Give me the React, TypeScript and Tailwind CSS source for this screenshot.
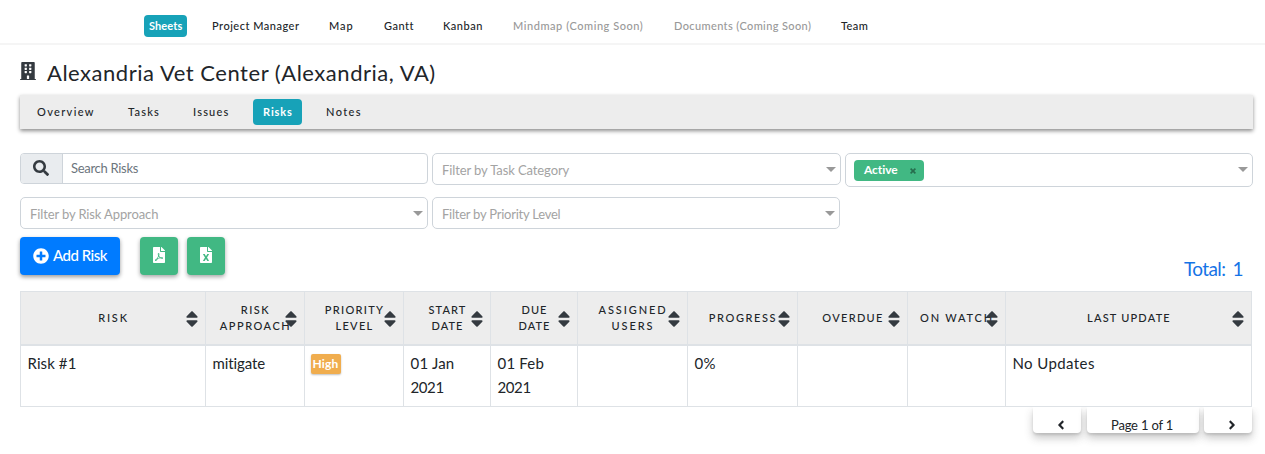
import type { ReactNode } from "react";
import { FaBuilding, FaSearch, FaPlusCircle, FaFilePdf, FaFileExcel, FaSort, FaAngleLeft, FaAngleRight } from "react-icons/fa";

const nav = [
  { t: "Project Manager", c: "w-[117px] tracking-[0.5px]" },
  { t: "Map", c: "w-[55px] tracking-[0.9px]" },
  { t: "Gantt", c: "w-[59px] tracking-[0.5px]" },
  { t: "Kanban", c: "w-[70px] tracking-[0.5px]" },
  { t: "Mindmap (Coming Soon)", c: "w-[161px] tracking-[0.55px] text-[#999999]" },
  { t: "Documents (Coming Soon)", c: "w-[167px] tracking-[0.38px] text-[#999999]" },
  { t: "Team", c: "w-[30px] tracking-[0.4px]" },
];

const heads = [
  { lines: ["RISK"], c: "w-[186px] border-l", t: "tracking-[1.8px]" },
  { lines: ["RISK", "APPROACH"], c: "w-[99px]", t: "tracking-[1.5px]" },
  { lines: ["PRIORITY", "LEVEL"], c: "w-[99px]", t: "tracking-[1.3px]" },
  { lines: ["START", "DATE"], c: "w-[87px]", t: "tracking-[1.1px]" },
  { lines: ["DUE", "DATE"], c: "w-[87px]", t: "tracking-[1.1px]" },
  { lines: ["ASSIGNED", "USERS"], c: "w-[110px]", t: "tracking-[1.9px]" },
  { lines: ["PROGRESS"], c: "w-[110px]", t: "tracking-[1.6px]" },
  { lines: ["OVERDUE"], c: "w-[110px]", t: "tracking-[1.3px]" },
  { lines: ["ON WATCH"], c: "w-[98px]", t: "tracking-[1.8px]" },
  { lines: ["LAST UPDATE"], c: "w-[246px]", t: "tracking-[1.2px]" },
];

const cells: { c: string; v: ReactNode }[] = [
  { c: "w-[186px] border-l tracking-[0.1px]", v: "Risk #1" },
  { c: "w-[99px] tracking-[-0.1px]", v: "mitigate" },
  {
    c: "w-[99px]",
    v: (
      <span className="-ml-px mt-[3px] flex h-5 w-[30px] items-center justify-center rounded-[2px] bg-[#f0ad4e] text-[12px] font-bold tracking-[0.2px] text-white shadow-[0_1px_2px_rgba(0,0,0,0.25)]">
        High
      </span>
    ),
  },
  { c: "w-[87px] tracking-[0.2px]", v: <>01 Jan<br /><span className="tracking-[-0.4px]">2021</span></> },
  { c: "w-[87px] tracking-[0.2px]", v: <>01 Feb<br /><span className="tracking-[-0.4px]">2021</span></> },
  { c: "w-[110px]", v: "" },
  { c: "w-[110px] tracking-[0.2px]", v: "0%" },
  { c: "w-[110px]", v: "" },
  { c: "w-[98px]", v: "" },
  { c: "w-[246px] tracking-[0.4px]", v: "No Updates" },
];

function Caret({ c }: { c: string }) {
  return <span className={"h-0 w-0 border-x-[5px] border-t-[5px] border-x-transparent border-t-[#999999] " + c} />;
}

function Filter({ label, c }: { label: string; c: string }) {
  return (
    <div className={"flex h-8 items-center justify-between rounded-[5px] border border-[#ced4da] pr-1 pl-[9px] text-[13px] text-[#a3a3a3] " + c}>
      <span className="pt-[3px]">{label}</span>
      <Caret c="mt-px" />
    </div>
  );
}

const pagerShadow = "shadow-[0_5px_8px_rgba(56,56,56,0.28),0_2px_2px_rgba(56,56,56,0.12)]";

export default function App() {
  return (
    <div className="h-[454px] w-[1265px] overflow-hidden bg-white font-['Lato',sans-serif] text-[#212529]">
      <nav className="flex h-[45px] items-start border-b-2 border-[#f5f5f5] pt-[15px] pl-[144px] text-[11px] leading-[22px] font-medium whitespace-nowrap">
        <a className="mr-[25px] w-[43px] rounded-[4px] bg-[#17a2b8] pl-[5px] font-bold tracking-[0.1px] text-white">Sheets</a>
        <div className="flex">
          {nav.map((n) => (
            <a key={n.t} className={n.c}>{n.t}</a>
          ))}
        </div>
      </nav>

      <main className="pl-5">
        <h1 className="flex h-[50px] items-center pb-[1px] whitespace-nowrap">
          <FaBuilding className="mt-[3px] mr-[11px] h-[18px] w-[16px] text-[#343a40]" />
          <span className="pt-[7px] text-[22px] leading-[30px] tracking-[0.53px]">Alexandria Vet Center (Alexandria, VA)</span>
        </h1>

        <div className="flex h-[34px] w-[1233px] items-center bg-[#ededed] text-[11px] leading-[26px] font-medium whitespace-nowrap shadow-[0_2px_4px_rgba(0,0,0,0.45)]">
          <a className="ml-[17px] w-[91px] tracking-[1.35px]">Overview</a>
          <a className="w-[65px] tracking-[1.2px]">Tasks</a>
          <a className="w-[60px] tracking-[1.2px]">Issues</a>
          <a className="h-[26px] w-[49px] rounded-[4px] bg-[#17a2b8] pl-[10px] font-bold tracking-[0.9px] text-white">Risks</a>
          <a className="ml-[24px] tracking-[1.4px]">Notes</a>
        </div>

        <div className="mt-6 flex h-11 items-start gap-1">
          <div className="flex h-[31px] w-[408px] rounded-[4px] border border-[#ced4da]">
            <div className="flex w-[42px] items-center justify-center rounded-l-[3px] border-r border-[#ced4da] bg-[#e9ecef] pr-px pb-px">
              <FaSearch className="h-4 w-4 text-[#343a40]" />
            </div>
            <span className="pl-2 text-[13px] leading-[29px] tracking-[-0.3px] text-[#6c757d]">Search Risks</span>
          </div>
          <Filter label="Filter by Task Category" c="w-[409px] tracking-[-0.1px]" />
          <div className="flex h-[34px] w-[408px] items-center justify-between rounded-[5px] border border-[#ced4da] pr-1 pl-2">
            <span className="flex h-[21px] w-[70px] items-center rounded-[4px] bg-[#41b883] pl-[10px] text-[12px] font-bold tracking-[-0.05px] text-white">
              Active
              <svg viewBox="0 0 6 6" className="mt-px ml-[12px] h-[6px] w-[6px] stroke-[#266d4d] stroke-[1.6]">
                <path d="M.6.6l4.8 4.8M5.4.6L.6 5.4" />
              </svg>
            </span>
            <Caret c="mb-px" />
          </div>
        </div>
        <div className="flex h-10 items-start gap-1">
          <Filter label="Filter by Risk Approach" c="w-[408px] tracking-[-0.12px]" />
          <Filter label="Filter by Priority Level" c="w-[408px] tracking-[-0.24px]" />
        </div>

        <div className="flex h-[54px] w-[1233px] items-start text-white">
          <button className="flex h-[38px] w-[100px] items-center rounded-[4px] bg-[#007bff] pb-px pl-[13px] text-[15px] font-medium tracking-[-0.5px] whitespace-nowrap shadow-[0_2px_4px_rgba(0,0,0,0.4)]">
            <FaPlusCircle className="mr-[4px] h-4 w-4" />
            Add Risk
          </button>
          <button className="ml-5 flex h-[38px] w-[38px] items-center justify-center rounded-[4px] bg-[#41b883] pb-[2px] shadow-[0_2px_4px_rgba(0,0,0,0.35)]">
            <FaFilePdf className="h-4 w-4" />
          </button>
          <button className="ml-[9px] flex h-[38px] w-[38px] items-center justify-center rounded-[4px] bg-[#41b883] pb-[2px] shadow-[0_2px_4px_rgba(0,0,0,0.35)]">
            <FaFileExcel className="h-4 w-4" />
          </button>
          <span className="mt-[20px] mr-[10px] ml-auto text-[19px] leading-6 tracking-[-0.6px] [word-spacing:3px] text-[#1573e6]">Total: 1</span>
        </div>

        <div className="w-[1232px] border-t border-[#dee2e6]">
          <div className="flex h-[54px] border-b-2 border-[#dee2e6] bg-[#ededed] text-[11px] leading-4 font-medium">
            {heads.map((h) => (
              <div key={h.lines.join()} className={"relative flex shrink-0 flex-col items-center justify-center border-r border-[#dee2e6] pl-px whitespace-nowrap " + h.c + " " + h.t}>
                {h.lines.map((l) => (
                  <span key={l}>{l}</span>
                ))}
                <FaSort className="absolute top-[17px] right-[3px] h-[20px] w-[20px] text-[#343a40]" />
              </div>
            ))}
          </div>
          <div className="flex h-[61px] border-b border-[#dee2e6] text-[15px] leading-6">
            {cells.map((c, i) => (
              <div key={i} className={"shrink-0 border-r border-[#dee2e6] pt-[5px] pl-[6.5px] " + c.c}>{c.v}</div>
            ))}
          </div>
        </div>

        <div className="flex h-[50px] w-[1240px] justify-end overflow-hidden pr-2 text-[13px]">
          <div className={"flex h-[26px] w-12 items-center justify-center rounded-b-[4px] bg-white pt-[9px] pl-[8px] " + pagerShadow}>
            <FaAngleLeft className="h-[14px] w-[14px] text-[#212529]" />
          </div>
          <div className={"ml-[6px] h-[26px] w-28 rounded-b-[4px] bg-white pt-[2px] pl-6 leading-[33px] tracking-[-0.2px] whitespace-nowrap " + pagerShadow}>
            Page 1 of 1
          </div>
          <div className={"ml-[5px] flex h-[26px] w-12 items-center justify-center rounded-b-[4px] bg-white pt-[9px] pl-[8px] " + pagerShadow}>
            <FaAngleRight className="h-[14px] w-[14px] text-[#212529]" />
          </div>
        </div>
      </main>
    </div>
  );
}
